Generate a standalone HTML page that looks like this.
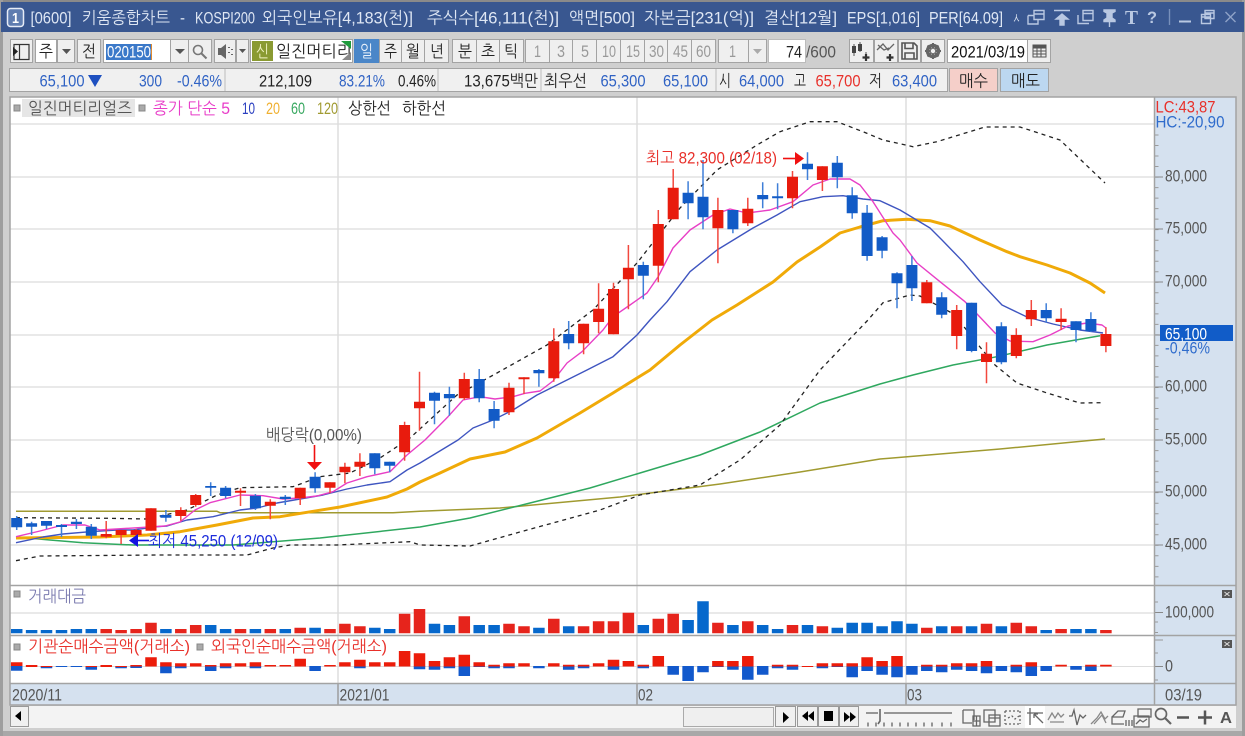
<!DOCTYPE html>
<html lang="ko"><head><meta charset="utf-8"><title>키움종합차트</title>
<style>
html,body{margin:0;padding:0;background:#cfcfcf;width:1245px;height:736px;overflow:hidden}
svg{display:block;position:absolute;left:0;top:0;filter:blur(0.3px)}
text{font-family:"Liberation Sans","NanumGothic","Noto Sans CJK KR",sans-serif;font-size:16.500px;fill:#222;white-space:pre}
.tt text{fill:#dfe7f4;font-size:16.500px}
.btn{fill:#efefef;stroke:#a3a3a3}
.wh{fill:#fff;stroke:#a3a3a3}
.blu{fill:#2f62c4}
.red{fill:#e8302a}
.gy{fill:#555}
.dis{fill:#999}
.ic{fill:none;stroke:#666;stroke-width:1.3}
</style></head><body>
<svg width="1245" height="736" viewBox="0 0 1245 736" xmlns="http://www.w3.org/2000/svg">
<rect width="1245" height="736" fill="#cfcfcf"/>
<rect x="0" y="0" width="1245" height="2" fill="#8a8a8a"/>
<rect x="0" y="731" width="1245" height="5" fill="#a8a8a8"/>
<rect x="0" y="0" width="3" height="736" fill="#9e9e9e"/>
<rect x="1242" y="0" width="3" height="736" fill="#9e9e9e"/>
<!-- title bar -->
<rect x="1" y="2" width="1243" height="30" fill="#395790"/>
<rect x="7.500" y="8.500" width="16" height="18" rx="3" fill="#5f7db0" stroke="#e6ecf6" stroke-width="1.500"/>
<text x="12" y="23" style="fill:#fff;font-size:15px;font-weight:bold" textLength="7" lengthAdjust="spacingAndGlyphs">1</text>
<g class="tt">
<text x="30.500" y="23.500" textLength="41" lengthAdjust="spacingAndGlyphs">[0600]</text>
<text x="82" y="23.500" textLength="88" lengthAdjust="spacingAndGlyphs">키움종합차트</text>
<text x="180" y="23.500" textLength="5" lengthAdjust="spacingAndGlyphs">-</text>
<text x="195" y="23.500" textLength="60" lengthAdjust="spacingAndGlyphs">KOSPI200</text>
<text x="262" y="23.500" textLength="151" lengthAdjust="spacingAndGlyphs">외국인보유[4,183(천)]</text>
<text x="427" y="23.500" textLength="132" lengthAdjust="spacingAndGlyphs">주식수[46,111(천)]</text>
<text x="569" y="23.500" textLength="66" lengthAdjust="spacingAndGlyphs">액면[500]</text>
<text x="644" y="23.500" textLength="110" lengthAdjust="spacingAndGlyphs">자본금[231(억)]</text>
<text x="764" y="23.500" textLength="73" lengthAdjust="spacingAndGlyphs">결산[12월]</text>
<text x="847" y="23.500" textLength="73" lengthAdjust="spacingAndGlyphs">EPS[1,016]</text>
<text x="929" y="23.500" textLength="74" lengthAdjust="spacingAndGlyphs">PER[64.09]</text>
<text x="1012" y="23.500" textLength="9" lengthAdjust="spacingAndGlyphs">ㅅ</text>
</g>
<g fill="none" stroke="#b9c8e2" stroke-width="1.400">
<path d="M1034 10.500h10v9h-10zM1034 14h10M1028 15.500h6M1028 15.500v8.500h10v-4.500"/>
<path d="M1054 10.500h16M1062 14l-6 5h4v6h4v-6h4z" fill="#b9c8e2"/>
<path d="M1083 10.500h10v10h-10zM1083 13.500h10M1078 15v8.500h11"/>
<path d="M1104 10h11v1.500l-3 1.500v5l3 2v1.500h-11v-1.500l3-2v-5l-3-1.500zM1109.500 22v5" fill="#b9c8e2"/>
<path d="M1169.500 9v16" stroke="#7890bb"/>
<path d="M1179 21.500h12" stroke-width="2"/>
<path d="M1205 10.500h9v8h-9zM1205 13h9M1201.500 14.500h9v9h-9zM1201.500 17h9"/>
<path d="M1225.500 12l10 10M1235.500 12l-10 10" stroke="#8ea2c8"/>
</g>
<text x="1125" y="24" style="fill:#b9c8e2;font-family:'Liberation Serif';font-size:20px;font-weight:bold" textLength="13" lengthAdjust="spacingAndGlyphs">T</text>
<text x="1147" y="23" style="fill:#b9c8e2;font-size:17px;font-weight:bold" textLength="10" lengthAdjust="spacingAndGlyphs">?</text>

<!-- toolbar row 1 -->
<rect class="btn" x="10.500" y="39.500" width="22" height="23"/>
<path d="M14 44.500h15v15h-15zM19.500 44.500v15" fill="none" stroke="#333" stroke-width="1.200"/>
<path d="M13 47v9l5-4.500z" fill="#222"/>
<rect class="wh" x="35.500" y="39.500" width="21" height="23"/><text x="39" y="57" textLength="14" lengthAdjust="spacingAndGlyphs">주</text>
<rect class="btn" x="57.500" y="39.500" width="17" height="23"/><path d="M62 49h9l-4.500 5z" fill="#555"/>
<rect class="btn" x="77.500" y="39.500" width="23" height="23"/><text x="82" y="57" textLength="14" lengthAdjust="spacingAndGlyphs">전</text>
<rect class="wh" x="103.500" y="39.500" width="67" height="23"/>
<rect x="106" y="44" width="46" height="16" fill="#3b79c9"/><rect x="151" y="44" width="1" height="16" fill="#e08a30"/>
<text x="107" y="57.500" style="fill:#fff" textLength="44" lengthAdjust="spacingAndGlyphs">020150</text>
<rect class="btn" x="170.500" y="39.500" width="18" height="23"/><path d="M175 49h10l-5 5z" fill="#555"/>
<rect class="btn" x="188.500" y="39.500" width="23" height="23"/>
<circle cx="198" cy="50" r="4.500" fill="none" stroke="#777" stroke-width="1.600"/><path d="M201.500 53.500l5 5" stroke="#777" stroke-width="2"/>
<rect class="btn" x="214.500" y="39.500" width="21" height="23"/><path d="M218 48h3l5-4v15l-5-4h-3z" fill="#666"/><path d="M228 47.500h2M231 49.500h2M228 52.500h2M231 54.500h2" stroke="#666"/>
<rect class="btn" x="236.500" y="39.500" width="12" height="23"/><path d="M239 49h7l-3.500 4z" fill="#555"/>
<rect x="250.500" y="39.500" width="102" height="23" fill="#fff" stroke="#a3a3a3"/>
<rect x="252" y="41" width="21" height="20" fill="#8a9a32"/>
<text x="256" y="57" style="fill:#eef0c0" textLength="13" lengthAdjust="spacingAndGlyphs">신</text>
<text x="276" y="57" textLength="76" lengthAdjust="spacingAndGlyphs">일진머티리</text>
<path d="M341 41h10v8z" fill="#1f9a3c"/><path d="M351 60h-9l9-8z" fill="#888"/>
<rect x="354.500" y="39.500" width="24" height="23" fill="#4a86c8" stroke="#4a86c8"/><text x="360" y="57" style="fill:#e8f0fa" textLength="13" lengthAdjust="spacingAndGlyphs">일</text>
<rect class="btn" x="379.500" y="39.500" width="22" height="23"/><text x="384" y="57" textLength="13" lengthAdjust="spacingAndGlyphs">주</text>
<rect class="btn" x="401.500" y="39.500" width="23" height="23"/><text x="406" y="57" textLength="14" lengthAdjust="spacingAndGlyphs">월</text>
<rect class="btn" x="424.500" y="39.500" width="24" height="23"/><text x="430" y="57" textLength="14" lengthAdjust="spacingAndGlyphs">년</text>
<rect class="btn" x="452.500" y="39.500" width="24" height="23"/><text x="458" y="57" textLength="14" lengthAdjust="spacingAndGlyphs">분</text>
<rect class="btn" x="476.500" y="39.500" width="23" height="23"/><text x="481" y="57" textLength="14" lengthAdjust="spacingAndGlyphs">초</text>
<rect class="btn" x="499.500" y="39.500" width="24" height="23"/><text x="504" y="57" textLength="14" lengthAdjust="spacingAndGlyphs">틱</text>
<g>
<rect class="btn" x="525.500" y="39.500" width="24" height="23"/><rect class="btn" x="549.500" y="39.500" width="23" height="23"/><rect class="btn" x="572.500" y="39.500" width="24" height="23"/><rect class="btn" x="596.500" y="39.500" width="24" height="23"/><rect class="btn" x="620.500" y="39.500" width="24" height="23"/><rect class="btn" x="644.500" y="39.500" width="23" height="23"/><rect class="btn" x="667.500" y="39.500" width="24" height="23"/><rect class="btn" x="691.500" y="39.500" width="24" height="23"/>
<text class="dis" x="534" y="57" textLength="7" lengthAdjust="spacingAndGlyphs">1</text>
<text class="dis" x="557" y="57" textLength="8" lengthAdjust="spacingAndGlyphs">3</text>
<text class="dis" x="581" y="57" textLength="8" lengthAdjust="spacingAndGlyphs">5</text>
<text class="dis" x="602" y="57" textLength="14" lengthAdjust="spacingAndGlyphs">10</text>
<text class="dis" x="626" y="57" textLength="14" lengthAdjust="spacingAndGlyphs">15</text>
<text class="dis" x="649" y="57" textLength="15" lengthAdjust="spacingAndGlyphs">30</text>
<text class="dis" x="673" y="57" textLength="15" lengthAdjust="spacingAndGlyphs">45</text>
<text class="dis" x="696" y="57" textLength="15" lengthAdjust="spacingAndGlyphs">60</text>
</g>
<rect class="btn" x="718.500" y="39.500" width="30" height="23"/><text class="dis" x="729" y="57" textLength="7" lengthAdjust="spacingAndGlyphs">1</text>
<rect class="btn" x="748.500" y="39.500" width="18" height="23"/><path d="M753 49h9l-4.500 5z" fill="#aaa"/>
<rect x="768.500" y="39.500" width="37" height="23" fill="#fff" stroke="#bbb"/>
<text x="786" y="57.500" textLength="16" lengthAdjust="spacingAndGlyphs">74</text>
<text class="gy" x="806" y="57.500" textLength="30" lengthAdjust="spacingAndGlyphs">/600</text>
<rect class="btn" x="849.500" y="39.500" width="24" height="23"/>
<path d="M854 44v12M860 42v10M854 47h0M866 52v6" stroke="#555"/><rect x="852" y="46" width="4" height="7" fill="#444"/><rect x="858" y="44" width="4" height="7" fill="#444"/><path d="M866 54v7M862.500 57.500h7" stroke="#333" stroke-width="2.200"/>
<rect class="btn" x="874.500" y="39.500" width="23" height="23"/>
<path d="M877 50l6-6 5 6 6-6M878 45l6 5 5-2" class="ic"/><path d="M890 54v7M886.500 57.500h7" stroke="#333" stroke-width="2.200"/>
<rect class="btn" x="898.500" y="39.500" width="22" height="23"/>
<path d="M902 43h12l3 3v13h-15zM905 43.500v5h8v-5M905 59v-6h9v6" fill="none" stroke="#555" stroke-width="1.600"/>
<rect class="btn" x="921.500" y="39.500" width="23" height="23"/>
<circle cx="933" cy="51" r="5.500" fill="none" stroke="#666" stroke-width="3.500"/><path d="M933 43v16M925 51h16M927.500 45.500l11 11M938.500 45.500l-11 11" stroke="#666" stroke-width="2"/>
<circle cx="933" cy="51" r="2.200" fill="#efefef"/>
<rect class="wh" x="947.500" y="39.500" width="80" height="23"/>
<text x="951" y="57.500" style="fill:#111" textLength="74" lengthAdjust="spacingAndGlyphs">2021/03/19</text>
<rect class="btn" x="1027.500" y="39.500" width="23" height="23"/>
<path d="M1033 45h13v12h-13zM1033 48h13M1033 51h13M1033 54h13M1037 48v9M1041 48v9" fill="none" stroke="#555"/><rect x="1033" y="45" width="13" height="3" fill="#555"/>

<!-- row 2 -->
<rect x="9.500" y="68.500" width="938" height="23" fill="#f0f0f0" stroke="#a3a3a3"/>
<path d="M225 69v22M438 69v22M541 69v22M716 69v22" stroke="#bbb"/>
<g>
<text class="blu" x="39.500" y="86.500" textLength="45" lengthAdjust="spacingAndGlyphs">65,100</text>
<path d="M88 75h14l-7 12z" fill="#1e50c0"/>
<text class="blu" x="139" y="86.500" textLength="23" lengthAdjust="spacingAndGlyphs">300</text>
<text class="blu" x="177" y="86.500" textLength="45" lengthAdjust="spacingAndGlyphs">-0.46%</text>
<text x="259" y="86.500" textLength="53" lengthAdjust="spacingAndGlyphs">212,109</text>
<text class="blu" x="339" y="86.500" textLength="46" lengthAdjust="spacingAndGlyphs">83.21%</text>
<text x="398" y="86.500" textLength="38" lengthAdjust="spacingAndGlyphs">0.46%</text>
<text x="464" y="86.500" textLength="74" lengthAdjust="spacingAndGlyphs">13,675백만</text>
<text x="544" y="86.500" textLength="43" lengthAdjust="spacingAndGlyphs">최우선</text>
<text class="blu" x="600.500" y="86.500" textLength="45" lengthAdjust="spacingAndGlyphs">65,300</text>
<text class="blu" x="663" y="86.500" textLength="45" lengthAdjust="spacingAndGlyphs">65,100</text>
<text x="719" y="86.500" textLength="12" lengthAdjust="spacingAndGlyphs">시</text>
<text class="blu" x="739" y="86.500" textLength="45" lengthAdjust="spacingAndGlyphs">64,000</text>
<text x="794" y="86.500" textLength="12" lengthAdjust="spacingAndGlyphs">고</text>
<text class="red" x="815.500" y="86.500" textLength="45" lengthAdjust="spacingAndGlyphs">65,700</text>
<text x="869" y="86.500" textLength="13" lengthAdjust="spacingAndGlyphs">저</text>
<text class="blu" x="892" y="86.500" textLength="45" lengthAdjust="spacingAndGlyphs">63,400</text>
</g>
<rect x="949.500" y="68.500" width="48" height="23" fill="#f5cfc9" stroke="#a3a3a3"/>
<text x="959" y="86.500" textLength="29" lengthAdjust="spacingAndGlyphs">매수</text>
<rect x="1000.500" y="68.500" width="48" height="23" fill="#bcd7f0" stroke="#a3a3a3"/>
<text x="1011" y="86.500" textLength="29" lengthAdjust="spacingAndGlyphs">매도</text>

<!-- chart background -->
<rect x="10" y="97" width="1226" height="608" fill="#fff"/>
<rect x="1154" y="97" width="82" height="608" fill="#d5e1ef"/>
<rect x="10" y="683" width="1226" height="22" fill="#d5e1ef"/>
<!-- grid -->
<path d="M10 124H1154M10 177H1154M10 229H1154M10 282H1154M10 335H1154M10 387H1154M10 440H1154M10 492H1154M10 545H1154M10 613H1154" stroke="#e2e2e2" stroke-width="1.600"/>
<path d="M10 666.500H1154" stroke="#ddd" stroke-width="1"/>
<path d="M338 97V683M637 97V683M906 97V705" stroke="#dcdcdc" stroke-width="1.400"/>
<path d="M338 683V705M637 683V705M906 683V705" stroke="#999" stroke-width="1.400"/>

<!-- MA lines -->
<g fill="none" stroke-linejoin="round">
<polyline stroke="#a09a30" stroke-width="1.500" points="16,511.300 217,511.300 220,512.700 393,512.700 420,511.300 500,508 620,497 720,484 800,472 880,459 1000,449 1105,439"/>
<polyline stroke="#2fa85f" stroke-width="1.500" points="16,537 50,540 83,542.700 133,545 233,545 320,538 420,527 470,518 530,503 590,488 640,473 700,455 760,432 820,403 880,384 913,375 953,365 997,356.700 1047,345 1100,335.700"/>
<polyline stroke="#f0aa08" stroke-width="3" points="16,538 100,537 147,535 180,531.700 217,525 253,518 280,516.700 317,510.700 340,507 387,497 407,489 420,482 440,473 470,459 505,452 537,438 580,413 613,393 637,378 650,370 680,345 712,320 737,305 773,282 797,262 820,247 840,233 860,227 883,220.700 907,219.300 930,220.700 950,226 965,233 980,240 1007,251.700 1020,256.700 1047,265 1070,273 1090,283 1105,293"/>
<polyline stroke="#3f55c0" stroke-width="1.400" points="16,542.700 43,537 63,534 90,531.700 117,530 133,530 157,526.700 167,526 187,520 213,516.700 240,510 257,508 277,503 300,499 323,495 347,489 367,485 390,481.700 407,470 420,463 458,440 473,428 493,420 513,410 537,395 557,385 587,370 613,356.700 637,335 650,320 667,301.700 690,271.700 717,250 753,228 777,215 800,201.700 823,196.700 843,195.700 863,199 880,200.700 900,210 930,228 942,240 963,261.700 980,281.700 1002,305 1027,317 1053,324 1080,330 1103,333"/>
<polyline stroke="#e83fc6" stroke-width="1.400" points="16,536.700 40,531 63,525 85,525 100,530 150,527 165,526 180,522 195,510 210,502.700 240,495 263,495.700 283,499 300,498 317,496 333,491.700 347,483 367,476.700 390,471.700 407,455 425,440 448,416.700 463,400 480,396.700 495,399 513,396.700 525,393.300 540,391 553,381 567,363 582,351.700 603,330 613,316.700 630,305 647,293 658,277 673,248 690,230 713,215 730,209 747,213 770,210 793,201.700 813,185 830,179 850,179 860,185 873,201.700 893,233 900,240 917,263 940,281.700 965,301.700 978,315 995,333 1010,341 1033,341.700 1050,335 1068,326 1087,323 1102,325 1106,328"/>
<polyline stroke="#222" stroke-width="1.300" stroke-dasharray="4 4" points="16,517.700 110,518.300 147,519 187,510 217,495 240,487.700 293,486.700 320,476.700 350,473 380,458 410,438 457,395 497,373 547,345 593,310 637,263 680,208 717,170 757,145 780,131.700 810,121.700 837,121.700 863,131.700 883,140 913,146.700 937,141.700 985,127 1020,127 1060,140 1105,183"/>
<polyline stroke="#222" stroke-width="1.300" stroke-dasharray="4 4" points="16,560.700 40,556 157,555 247,555 273,548 290,545 337,545 410,541.700 420,545 470,546 520,532 600,510 640,495 700,485 740,460 780,425 820,370 868,320 883,302.700 910,295 920,296 950,312 965,328 980,347 995,365 1017,383 1047,393 1080,403 1102,402.700"/>
</g>

<!-- wicks -->
<path stroke="#f2483e" stroke-width="1.500" fill="none" d="M106.200 521V538.300M121.100 530V544M136.100 529V539M151 508.300V530.700M180.800 507.300V520.700M195.700 494V506.700M240.500 488.300V506M270.300 499.300V519.300M300.200 487.700V505M330 482.300V493.300M344.900 462.700V483.300M359.900 453.300V476M404.600 421.700V460.700M419.500 371.700V430.700M464.300 372.700V400M509 382.700V415M524 377.300V394M553.800 328.300V381.700M583.600 323.700V354.300M598.600 283.300V333.300M613.500 282.700V334.300M628.400 245V309.300M658.300 210V282.300M673.200 169V219.300M717.900 197.700V263.300M747.800 197.700V226M792.500 171V208.300M822.400 166.300V191M926.800 280V303.300M956.700 305V349.300M986.500 342.300V383.300M1016.300 328.300V358.300M1031.300 300V326M1061.100 308.300V330M1105.900 327.300V352.300"/>
<path stroke="#3f7fd8" stroke-width="1.500" fill="none" d="M16.700 516V530M31.600 521.700V535M46.500 521V529M61.500 524V537M76.400 519V529M91.300 524V539M165.900 510V521.700M210.700 482.300V496M225.600 486V498.300M255.400 494V510M285.300 495V505M315.100 472.300V492.700M374.800 453.300V474.300M389.700 461.700V472.300M434.500 391.700V424.300M449.400 386.700V415.700M479.200 369V402.300M494.100 401V428.300M538.900 369V386.700M568.700 321V349.300M643.300 261.700V299.300M688.100 181.300V219.300M703 160V229.300M732.900 210V233.300M762.700 182.300V208.300M777.600 183.300V209.300M807.500 152.300V180M837.300 156V188.300M852.200 187.300V218.700M867.100 205V260.700M882.100 236V258.300M897 272.300V308.300M911.900 256V301M941.700 292.300V318.300M971.600 302.700V352.300M1001.400 322.300V364.300M1046.200 303.300V322.700M1076 321.300V342.300M1090.900 312.300V332"/>
<!-- bodies -->
<path stroke="#e81b0d" stroke-width="11" fill="none" d="M106.200 534V536.700M121.100 530V535M136.100 530V535M151 508.300V530.700M180.800 510V516M195.700 495V505M240.500 490.700V492.700M270.300 501.700V505.700M300.200 487.700V498.300M330 482.300V487.700M344.900 466.700V472.300M359.900 461.700V466.700M404.600 425V452.300M419.500 401.700V408.300M464.300 379V398.300M509 387.700V412.300M524 377.300V379.300M553.800 341.300V378.300M583.600 323.700V343.300M598.600 308.700V322M613.500 289V334.300M628.400 267.700V279.300M658.300 224V265.700M673.200 187.700V219.300M717.900 210V228.300M747.800 208.700V223.300M792.500 176.700V198.300M822.400 166.300V180M926.800 282.300V303.300M956.700 310V336M986.500 353.700V362M1016.300 335V356M1031.300 310V319.300M1061.100 318.700V322M1105.900 334V346"/>
<path stroke="#125bc6" stroke-width="11" fill="none" d="M16.700 518V527.300M31.600 523.300V526.700M46.500 521V525.700M61.500 525V527M76.400 521.700V524M91.300 526.700V535.700M165.900 515V517.700M210.700 486V487.700M225.600 487.700V496M255.400 495.700V508.300M285.300 496.700V499M315.100 476.700V488.300M374.800 453.300V468.300M389.700 461.700V465.700M434.500 392.700V400.700M449.400 394V398.300M479.200 379V398.300M494.100 409V420.700M538.900 370V373.300M568.700 334V343.300M643.300 265V275.700M688.100 192.700V203.300M703 196.700V217.300M732.900 210V229.300M762.700 195V199.300M777.600 196.300V198.300M807.500 163.700V169.300M837.300 162.700V177.300M852.200 195.300V213.300M867.100 212.700V256M882.100 237.300V250.700M897 273.300V283.300M911.900 265V288.300M941.700 297.300V314.700M971.600 302.700V351M1001.400 326.300V362.300M1046.200 310V318.300M1076 321.300V330M1090.900 319V331.300"/>

<!-- annotations -->
<text x="646" y="163.500" class="red" textLength="131" lengthAdjust="spacingAndGlyphs">최고 82,300 (02/18)</text>
<path d="M783 158.500H796" stroke="#f01010" stroke-width="1.600"/><path d="M795 152l9 6.500-9 6.500z" fill="#f01010"/>
<text x="266" y="440.500" class="gy" textLength="96" lengthAdjust="spacingAndGlyphs">배당락(0,00%)</text>
<path d="M314.500 445V463" stroke="#f01010" stroke-width="1.600"/><path d="M307 462h15l-7.500 8z" fill="#f01010"/>
<text x="148" y="546.500" style="fill:#1c2cdc" textLength="130" lengthAdjust="spacingAndGlyphs">최저 45,250 (12/09)</text>
<path d="M136 540.500H149" stroke="#1414e0" stroke-width="1.600"/><path d="M138 534l-9 6.500 9 6.500z" fill="#1414e0"/>

<!-- legend -->
<rect x="14" y="105" width="6" height="6" fill="#aaa" stroke="#888"/>
<rect x="22" y="99" width="113" height="18" fill="#e6e6e6"/>
<text x="28" y="114" class="gy" textLength="104" lengthAdjust="spacingAndGlyphs">일진머티리얼즈</text>
<rect x="139" y="105" width="6" height="6" fill="#aaa" stroke="#888"/>
<text x="153" y="114" style="fill:#e83cc8" textLength="77" lengthAdjust="spacingAndGlyphs">종가 단순 5</text>
<text x="242" y="114" style="fill:#2a3fc0" textLength="13" lengthAdjust="spacingAndGlyphs">10</text>
<text x="266" y="114" style="fill:#f0b030" textLength="14" lengthAdjust="spacingAndGlyphs">20</text>
<text x="291" y="114" style="fill:#38a860" textLength="14" lengthAdjust="spacingAndGlyphs">60</text>
<text x="317" y="114" style="fill:#a09a30" textLength="21" lengthAdjust="spacingAndGlyphs">120</text>
<text x="348" y="114" textLength="43" lengthAdjust="spacingAndGlyphs">상한선</text>
<text x="402" y="114" textLength="44" lengthAdjust="spacingAndGlyphs">하한선</text>

<!-- volume -->
<rect x="14" y="591" width="6" height="6" fill="#aaa" stroke="#888"/>
<text x="28" y="602" style="fill:#7c7cb0" textLength="58" lengthAdjust="spacingAndGlyphs">거래대금</text>
<path stroke="#e6241c" stroke-width="11.500" fill="none" d="M106.200 629V633.300M121.100 630V633.300M136.100 629V633.300M151 622.700V633.300M180.800 629V633.300M195.700 625V633.300M240.500 629V633.300M270.300 629V633.300M300.200 627.700V633.300M330 629V633.300M344.900 623.700V633.300M359.900 626.300V633.300M404.600 613.700V633.300M419.500 609V633.300M464.300 616.300V633.300M509 623.700V633.300M524 626.300V633.300M553.800 618.700V633.300M583.600 626.300V633.300M598.600 621.300V633.300M613.500 621.300V633.300M628.400 612.700V633.300M658.300 618.700V633.300M673.200 613.700V633.300M717.900 622.700V633.300M747.800 621.300V633.300M792.500 625V633.300M822.400 626.300V633.300M926.800 627.700V633.300M956.700 626.300V633.300M986.500 623.700V633.300M1016.300 622.700V633.300M1031.300 626.300V633.300M1061.100 629V633.300M1105.900 630V633.300"/>
<path stroke="#0668cc" stroke-width="11.500" fill="none" d="M16.700 629V633.300M31.600 630V633.300M46.500 630V633.300M61.500 630V633.300M76.400 629V633.300M91.300 629V633.300M165.900 629V633.300M210.700 625V633.300M225.600 629V633.300M255.400 629V633.300M285.300 629V633.300M315.100 627.700V633.300M374.800 627.700V633.300M389.700 629V633.300M434.500 623.700V633.300M449.400 625V633.300M479.200 625V633.300M494.100 625V633.300M538.900 627.700V633.300M568.700 626.300V633.300M643.300 625V633.300M688.100 620V633.300M703 601.300V633.300M732.900 625V633.300M762.700 625V633.300M777.600 629V633.300M807.500 625V633.300M837.300 627.700V633.300M852.200 622.700V633.300M867.100 622.700V633.300M882.100 626.300V633.300M897 621.300V633.300M911.900 623.700V633.300M941.700 626.300V633.300M971.600 626.300V633.300M1001.400 626.300V633.300M1046.200 630V633.300M1076 629V633.300M1090.900 629V633.300"/>

<!-- net-buy -->
<rect x="14" y="644" width="6" height="6" fill="#aaa" stroke="#888"/>
<text x="28" y="652" class="red" textLength="162" lengthAdjust="spacingAndGlyphs">기관순매수금액(거래소)</text>
<rect x="197" y="644" width="6" height="6" fill="#aaa" stroke="#888"/>
<text x="211" y="652" class="red" textLength="176" lengthAdjust="spacingAndGlyphs">외국인순매수금액(거래소)</text>
<path stroke="#1259cc" stroke-width="11.500" fill="none" d="M16.700 666V670.700M46.500 666V668.300M61.500 666V667M76.400 666V667M91.300 666V669.700M121.100 666V668.300M136.100 666V668M165.900 666V673.300M180.800 666V668.300M210.700 666V671M225.600 666V668.300M255.400 666V668.300M315.100 666V671M359.900 666V668.300M419.500 666V669.300M434.500 666V669.700M449.400 666V668.300M464.300 666V676M479.200 666V667M494.100 666V668.300M509 666V668.300M538.900 666V668.300M568.700 666V669.700M583.600 666V668.300M613.500 666V669.700M643.300 666V668.300M673.200 666V674.700M688.100 666V681M703 666V672.300M717.900 666V667M732.900 666V669.700M747.800 666V679.700M762.700 666V674.700M777.600 666V668.300M792.500 666V669.700M822.400 666V668.300M837.300 666V667M852.200 666V677.300M867.100 666V671M882.100 666V674.700M897 666V677.300M911.900 666V674.700M926.800 666V671M941.700 666V672.300M956.700 666V669.700M971.600 666V671M986.500 666V673.300M1001.400 666V671M1016.300 666V672.300M1031.300 666V676M1046.200 666V671M1076 666V669.700M1090.900 666V671"/>
<path stroke="#ec1c0a" stroke-width="11.500" fill="none" d="M16.700 662.300V666M31.600 665V667M46.500 666V667M91.300 666V667M106.200 665V667M121.100 666V667M136.100 665V666.500M151 657.300V666.500M165.900 662.300V666.500M180.800 663.300V666.500M195.700 663.300V666.500M210.700 665V666.500M225.600 663.300V666.500M240.500 663.300V666.500M255.400 662.300V666.500M270.300 665V666.500M285.300 665V666.500M300.200 658.700V666.500M330 665V666.500M344.900 662.300V666.500M359.900 659.700V666.500M374.800 662.300V666.500M389.700 662.300V666.500M404.600 651V666.500M419.500 653.300V666.500M434.500 661V666.500M449.400 657.300V666.500M464.300 654.700V666.500M479.200 662.300V666.500M494.100 664.700V666.500M509 663.300V666.500M524 663.300V666.500M553.800 663.300V666.500M568.700 664.700V666.500M583.600 664.700V666.500M598.600 663.300V666.500M613.500 659.700V666.500M628.400 661V666.500M643.300 664.700V666.500M658.300 656V666.500M717.900 661V666.500M732.900 661V666.500M747.800 656V666.500M777.600 664.700V666.500M792.500 664.700V666.500M807.500 666V667M822.400 663.300V666.500M837.300 663.300V666.500M852.200 663.300V666.500M867.100 657.300V666.500M882.100 661V666.500M897 656V666.500M926.800 664.700V666.500M941.700 664.700V666.500M956.700 663.300V666.500M971.600 663.300V666.500M986.500 661V666.500M1016.300 664.700V666.500M1031.300 662.300V666.500M1061.100 664.700V666.500M1090.900 664.700V666.500M1105.900 664.700V666.500"/>

<!-- axis -->
<path d="M1156.500 134.500V585" stroke="#9a9a9a" stroke-width="4" stroke-dasharray="1 9.520" fill="none"/>
<path d="M1154 177h9M1154 229h9M1154 282h9M1154 335h9M1154 387h9M1154 440h9M1154 492h9M1154 545h9" stroke="#888" stroke-width="1"/>
<g class="gy">
<text class="gy" x="1165" y="181.500" textLength="42" lengthAdjust="spacingAndGlyphs">80,000</text>
<text class="gy" x="1165" y="233.500" textLength="42" lengthAdjust="spacingAndGlyphs">75,000</text>
<text class="gy" x="1165" y="286.500" textLength="42" lengthAdjust="spacingAndGlyphs">70,000</text>
<text class="gy" x="1165" y="391.500" textLength="42" lengthAdjust="spacingAndGlyphs">60,000</text>
<text class="gy" x="1165" y="444.500" textLength="42" lengthAdjust="spacingAndGlyphs">55,000</text>
<text class="gy" x="1165" y="496.500" textLength="42" lengthAdjust="spacingAndGlyphs">50,000</text>
<text class="gy" x="1165" y="549.500" textLength="42" lengthAdjust="spacingAndGlyphs">45,000</text>
</g>
<rect x="1160" y="325" width="73" height="16" fill="#115cc8"/>
<text x="1165" y="339.500" style="fill:#fff" textLength="42" lengthAdjust="spacingAndGlyphs">65,100</text>
<text x="1165" y="353.500" style="fill:#2f6ccc" textLength="45" lengthAdjust="spacingAndGlyphs">-0,46%</text>
<text x="1155.500" y="112.500" class="red" textLength="60" lengthAdjust="spacingAndGlyphs">LC:43,87</text>
<text x="1155.500" y="127.500" style="fill:#2f6ccc" textLength="69" lengthAdjust="spacingAndGlyphs">HC:-20,90</text>
<path d="M1155 602h3M1155 622h3M1155 632.500h3M1155 640h8M1155 653h3M1155 680h3" stroke="#999" fill="none"/>
<path d="M1155 612.500h8M1155 666.500h8" stroke="#888" fill="none"/>
<text class="gy" x="1165" y="617.500" textLength="49" lengthAdjust="spacingAndGlyphs">100,000</text>
<text class="gy" x="1165" y="671.500" textLength="8" lengthAdjust="spacingAndGlyphs">0</text>
<rect x="1222" y="590" width="10" height="8" fill="#555"/><path d="M1224.500 592l5 4M1229.500 592l-5 4" stroke="#ddd"/>
<rect x="1222" y="640" width="10" height="8" fill="#555"/><path d="M1224.500 642l5 4M1229.500 642l-5 4" stroke="#ddd"/>
<!-- frame lines -->
<path d="M10 585.500H1236M10 635.500H1236M10 683.500H1236" stroke="#a3a3a3" stroke-width="1.500"/>
<rect x="10" y="97" width="1226" height="608" fill="none" stroke="#a3a3a3" stroke-width="1.500"/>
<path d="M1154.500 97V705" stroke="#a3a3a3" stroke-width="1.500"/>
<!-- dates -->
<text class="gy" x="12" y="700.500" textLength="50" lengthAdjust="spacingAndGlyphs">2020/11</text>
<text class="gy" x="339.500" y="700.500" textLength="50" lengthAdjust="spacingAndGlyphs">2021/01</text>
<text class="gy" x="638" y="700.500" textLength="15" lengthAdjust="spacingAndGlyphs">02</text>
<text class="gy" x="907" y="700.500" textLength="15" lengthAdjust="spacingAndGlyphs">03</text>
<text class="gy" x="1165" y="700.500" textLength="37" lengthAdjust="spacingAndGlyphs">03/19</text>

<!-- bottom bar -->
<rect x="10" y="706" width="1226" height="22" fill="#f3f3f3"/>
<rect x="10.500" y="706.500" width="18" height="20" fill="#f0f0f0" stroke="#999"/><path d="M21 711v10l-6-5z" fill="#000"/>
<rect x="683.500" y="707.500" width="90" height="19" fill="#efefef" stroke="#aaa"/>
<rect x="775.500" y="706.500" width="20" height="20" fill="#f0f0f0" stroke="#999"/><path d="M783 712v11l6-5.500z" fill="#000"/>
<rect x="797.500" y="706.500" width="20" height="20" fill="#f0f0f0" stroke="#999"/><path d="M808 711v10l-6-5zM814 711v10l-6-5z" fill="#000"/>
<rect x="818.500" y="706.500" width="20" height="20" fill="#f0f0f0" stroke="#999"/><rect x="824" y="711" width="9" height="10" fill="#000"/>
<rect x="839.500" y="706.500" width="19" height="20" fill="#f0f0f0" stroke="#999"/><path d="M844 712v10l6-5zM850 712v10l6-5z" fill="#000"/>
<path d="M866 713h12M884 713h68" stroke="#777" stroke-width="1.600"/><path d="M880 709v12l-2 3" stroke="#666" stroke-width="1.600" fill="none"/>
<path d="M868 723.500v4M876 723.500v4M884 723.500v4M892 723.500v4M900 723.500v4M908 723.500v4M916 723.500v4M924 723.500v4M932 723.500v4M942 723.500v4M951 723.500v4" stroke="#555" stroke-width="1.200" transform="translate(0,-1)"/>
<g class="ic">
<path d="M963 710h11v10M963 710v13h9M973 716h7v10h-7zM973 721h7M976.500 716v10"/>
<path d="M984 710h11v12h-11zM989 715h11v11h-11zM989 718h11"/>
<path d="M1005 711h15M1005 724h15M1005 711v13M1020 711v13M1008 718l4-2 3 3 4-3" stroke-dasharray="2 2"/>
</g>
<rect x="1025" y="706" width="20" height="22" fill="#fff"/>
<g class="ic">
<path d="M1030 708v17M1027 713h16M1034 714l9 9M1034 714h4M1034 714v4"/>
<path d="M1048 720l4-7 3 5 3-5 3 4 3-3M1050 722h14" stroke="#888"/>
<path d="M1069 716h3l2-6 3 15 3-10 3 3 3-3"/>
<path d="M1091 724l6-6 4-6 4 7 3-3M1094 724l8-9 4 8" stroke="#888"/>
<path d="M1112 717l6-6h7l-2 6h-7l-4 0v7h12M1126 720v6M1129 720v6M1132 720v6"/>
<path d="M1138 709h13v8h-13zM1134 716h15v11h-15zM1136 724l4-4 3 2 4-3"/>
</g>
<circle cx="1161" cy="714" r="5.500" fill="none" stroke="#666" stroke-width="1.700"/><path d="M1165 718l6 6" stroke="#666" stroke-width="2.200"/>
<path d="M1177 717.500h12" stroke="#555" stroke-width="2.500"/>
<path d="M1198 717.500h14M1205 710.500v14" stroke="#555" stroke-width="2.500"/>
<text x="1220" y="723" style="fill:#555;font-weight:bold;font-size:16px" textLength="12" lengthAdjust="spacingAndGlyphs">A</text>
</svg>
</body></html>
